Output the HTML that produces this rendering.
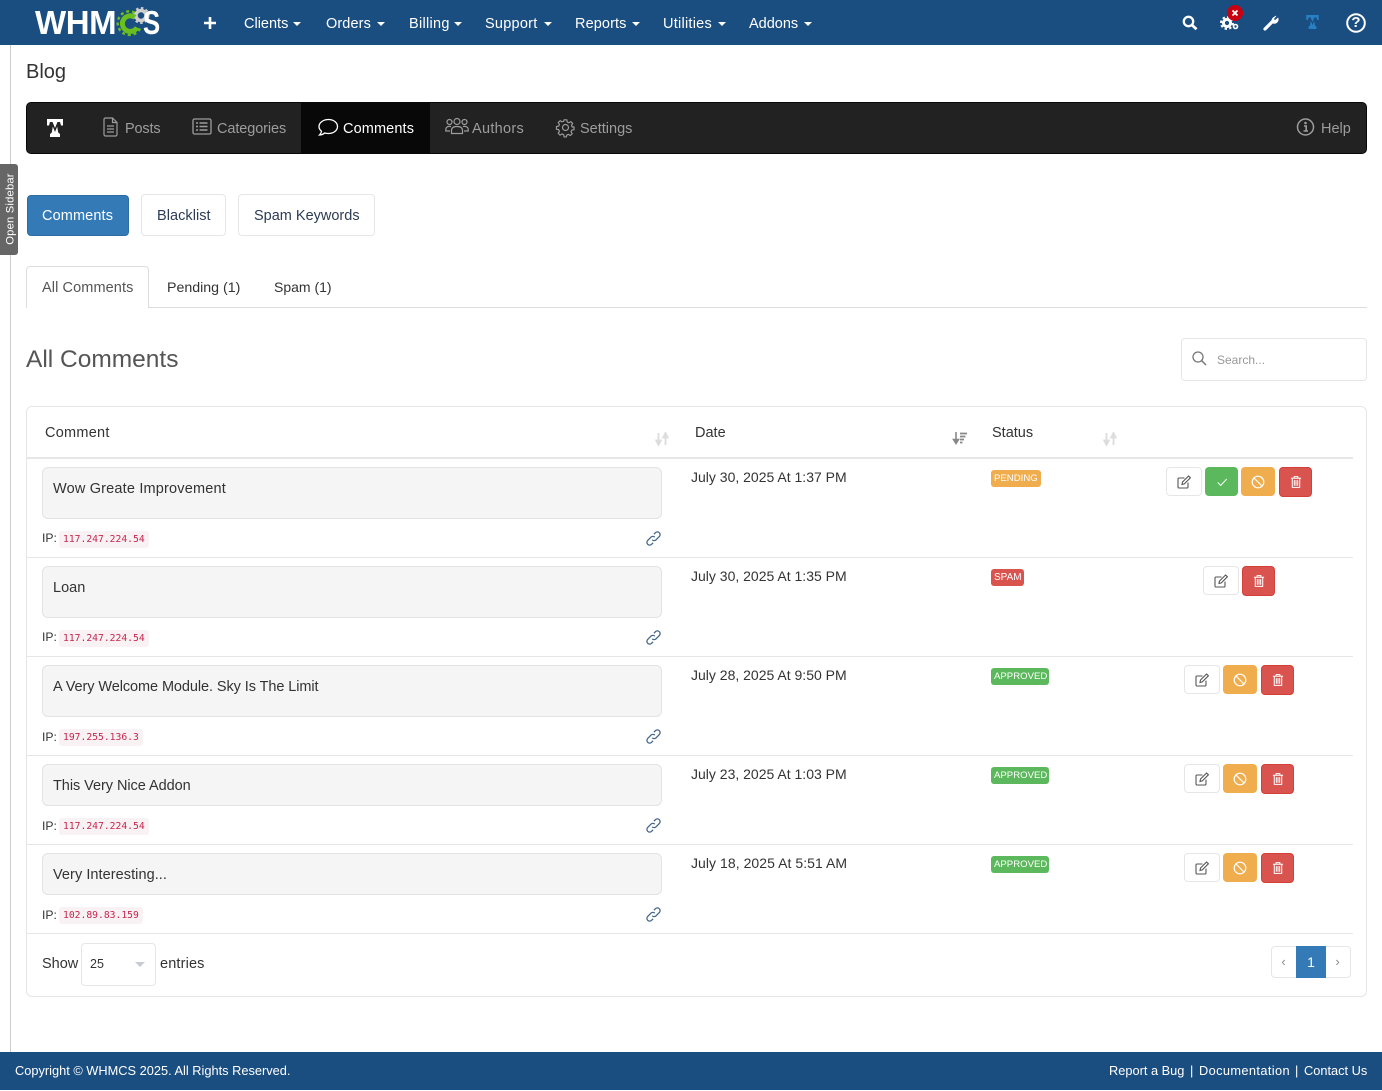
<!DOCTYPE html>
<html lang="en"><head><meta charset="utf-8"><title>Blog - Comments</title>
<style>
*{box-sizing:border-box}
html,body{margin:0;padding:0;background:#fff}
body{position:relative;width:1382px;height:1091px;overflow:hidden;font-family:"Liberation Sans",sans-serif;font-size:14.5px;color:#333}
.b{position:absolute}
.t{position:absolute;white-space:nowrap;line-height:20px;height:20px}
.nav{color:#fff}
.car{position:absolute;width:0;height:0;border-left:4px solid transparent;border-right:4px solid transparent;border-top:4px solid #fff;top:22px}
.dk{color:#9d9d9d}
.row{position:absolute;left:27px;width:1326px;height:1px;background:#e6e6e6}
.box{position:absolute;left:42px;width:620px;background:#f5f5f5;border:1px solid #e3e3e3;border-radius:6px}
.code{position:absolute;height:17px;line-height:17px;background:#f9f2f4;color:#c7254e;font-family:"DejaVu Sans Mono","Liberation Mono",monospace;font-size:9.7px;border-radius:3px;padding-left:4px;white-space:nowrap}
.lab{position:absolute;left:991px;height:17px;line-height:18px;color:#fff;font-size:9.6px;border-radius:3px;padding-left:3px;white-space:nowrap}
.btn{position:absolute;border-radius:4px}
.btn svg{position:absolute;left:50%;top:50%;transform:translate(-50%,-50%)}
.ed{width:36px;height:29px;background:#fff;border:1px solid #e6e6e6}
.gr{width:33px;height:29px;background:#5cb85c}
.or{width:34px;height:29px;background:#f0ad4e}
.rd{width:33px;height:30px;background:#d9534f;border:1px solid #d43f3a}
svg{overflow:visible;display:block}
.ic{position:absolute}
</style></head><body>
<svg width="0" height="0" style="position:absolute">
<defs>
<symbol id="edit" viewBox="0 0 14 14"><path d="M11 7.6V12a1 1 0 0 1-1 1H2a1 1 0 0 1-1-1V4a1 1 0 0 1 1-1h5.500" fill="none" stroke="#555" stroke-width="1.100"/><path d="M5 9.500 5.500 7 11.600 1l1.800 1.800L7.300 8.900z" fill="none" stroke="#555" stroke-width="1.100"/></symbol>
<symbol id="check" viewBox="0 0 14 14"><path d="M2 7.500 5.500 11 12.500 3.500" fill="none" stroke="#fff" stroke-width="1.200"/></symbol>
<symbol id="ban" viewBox="0 0 14 14"><circle cx="7" cy="7" r="5.800" fill="none" stroke="#fff" stroke-width="1.200"/><path d="M3 3 11 11" stroke="#fff" stroke-width="1.200"/></symbol>
<symbol id="trash" viewBox="0 0 14 14"><path d="M1.500 3h11M5 3V1.200h4V3M3 3v9.800h8V3M5.200 5v6M7 5v6M8.800 5v6" fill="none" stroke="#fff" stroke-width="1.100"/></symbol>
<symbol id="link" viewBox="0 0 14 14"><path d="M5.800 8.200a2.500 2.500 0 0 0 3.600 0l3-3a2.500 2.500 0 0 0-3.600-3.600L7.400 3" fill="none" stroke="#44668c" stroke-width="1.200"/><path d="M8.200 5.800a2.500 2.500 0 0 0-3.600 0l-3 3a2.500 2.500 0 0 0 3.600 3.600L6.600 11" fill="none" stroke="#44668c" stroke-width="1.200"/></symbol>
<symbol id="sort" viewBox="0 0 14 14"><path d="M3.500 1v10M1.200 8.500 3.500 13l2.300-4.500zM10.500 13V3M8.200 5.500 10.500 1l2.300 4.500z" fill="#ddd" stroke="#ddd" stroke-width="1.800"/></symbol>
<symbol id="tm" viewBox="0 0 16 18"><path d="M0 0h16v6.500h-2L13 3h-2.500L8 9 5.500 3H3L2 6.500H0zM5.800 7.500 8 13l2.200-5.500 1 6 1.800 1.500V18H3v-3l1.800-1.500z" fill="currentColor"/></symbol>
</defs></svg>

<!-- top nav -->
<div class="b" style="left:0;top:0;width:1382px;height:45px;background:#1a4d80"></div>
<div class="t" style="left:35px;top:3px;height:40px;line-height:40px;font-size:33px;font-weight:bold;color:#fff;letter-spacing:-.4px">WHM</div>
<svg class="ic" style="left:113px;top:7px" width="36" height="30" viewBox="0 0 36 30">
<circle cx="28" cy="8.500" r="5" fill="none" stroke="#cfcfcf" stroke-width="3.500"/>
<circle cx="28" cy="8.500" r="7.500" fill="none" stroke="#cfcfcf" stroke-width="2" stroke-dasharray="2.500 2.500"/>
<path d="M21.800 10.300A7.800 7.800 0 1 0 24 20.500" fill="none" stroke="#6bbe1f" stroke-width="5"/>
<path d="M21.800 5.600A11.800 11.800 0 1 0 27 21.500" fill="none" stroke="#6bbe1f" stroke-width="2.400" stroke-dasharray="3 2.800"/>
</svg>
<div class="t" style="left:143px;top:3px;height:40px;line-height:40px;font-size:33px;font-weight:bold;color:#fff;transform:scaleX(.78);transform-origin:left center">S</div>
<svg class="ic" style="left:203px;top:16px" width="14" height="14"><path d="M7 1v12M1 7h12" stroke="#fff" stroke-width="2.600"/></svg>
<div class="t nav" style="left:244px;top:14px">Clients</div><i class="car" style="left:293px"></i>
<div class="t nav" style="left:326px;top:14px;letter-spacing:.1px">Orders</div><i class="car" style="left:377px"></i>
<div class="t nav" style="left:409px;top:14px;letter-spacing:.3px">Billing</div><i class="car" style="left:454px"></i>
<div class="t nav" style="left:485px;top:14px;letter-spacing:.25px">Support</div><i class="car" style="left:544px"></i>
<div class="t nav" style="left:575px;top:14px;letter-spacing:.1px">Reports</div><i class="car" style="left:632px"></i>
<div class="t nav" style="left:663px;top:14px;letter-spacing:.25px">Utilities</div><i class="car" style="left:718px"></i>
<div class="t nav" style="left:749px;top:14px">Addons</div><i class="car" style="left:804px"></i>
<svg class="ic" style="left:1182px;top:15px" width="16" height="15"><circle cx="6.500" cy="6.500" r="4.700" fill="none" stroke="#fff" stroke-width="2.300"/><path d="M10 10l4.500 4.300" stroke="#fff" stroke-width="2.800"/></svg>
<svg class="ic" style="left:1220px;top:16px" width="20" height="15"><circle cx="7" cy="7" r="3.600" fill="none" stroke="#fff" stroke-width="3"/><circle cx="7" cy="7" r="6" fill="none" stroke="#fff" stroke-width="2" stroke-dasharray="2.400 2.300"/><circle cx="15.500" cy="10.500" r="2" fill="none" stroke="#fff" stroke-width="1.600"/></svg>
<div class="b" style="left:1227px;top:5px;width:16px;height:16px;border-radius:50%;background:#c9000f"></div>
<svg class="ic" style="left:1232px;top:10px" width="6" height="6"><path d="M.5.5l5 5M5.500.5l-5 5" stroke="#fff" stroke-width="1.800"/></svg>
<svg class="ic" style="left:1263px;top:15px" width="16" height="16"><path d="M2 14 9.500 6.500" stroke="#fff" stroke-width="3.200" stroke-linecap="round"/><path d="M9.500 8A4 4 0 0 1 10.500 2.500L13 1 10.500 4l1.500 1.500L15 3a4 4 0 0 1-5.500 5z" fill="#fff" stroke="#fff" stroke-width=".6"/></svg>
<svg class="ic" style="left:1306px;top:15px;color:#2780c5" width="13" height="14"><use href="#tm" width="13" height="14"/></svg>
<svg class="ic" style="left:1346px;top:13px" width="20" height="20"><circle cx="10" cy="10" r="8.800" fill="none" stroke="#fff" stroke-width="2"/></svg>
<div class="t" style="left:1346px;top:13px;width:20px;text-align:center;color:#fff;font-weight:bold;font-size:15px">?</div>

<!-- side -->
<div class="b" style="left:10px;top:45px;width:1px;height:1007px;background:#ccc"></div>
<div class="b" style="left:0;top:164px;width:18px;height:91px;background:#666;border-radius:0 3px 3px 0"></div>
<div class="t" style="left:-35px;top:199px;width:91px;text-align:center;color:#fff;font-size:11.200px;transform:rotate(-90deg);letter-spacing:.2px">Open Sidebar</div>

<div class="t" style="left:26px;top:62px;font-size:20px">Blog</div>

<!-- dark menu -->
<div class="b" style="left:26px;top:102px;width:1341px;height:52px;background:#222;border:1px solid #080808;border-radius:5px"></div>
<div class="b" style="left:301px;top:103px;width:129px;height:50px;background:#080808"></div>
<svg class="ic" style="left:47px;top:119px;color:#fff" width="16" height="18"><use href="#tm" width="16" height="18"/></svg>
<svg class="ic" style="left:103px;top:117px" width="15" height="20"><path d="M1 2.500A1.500 1.500 0 0 1 2.500 1H9.500L14 5.500V17.500A1.500 1.500 0 0 1 12.500 19H2.500A1.500 1.500 0 0 1 1 17.500zM9.500 1V5.500H14M4 9h7M4 12h7M4 15h7" fill="none" stroke="#9d9d9d" stroke-width="1.200"/></svg>
<div class="t dk" style="left:125px;top:119px;letter-spacing:-.15px">Posts</div>
<svg class="ic" style="left:192px;top:118px" width="20" height="18"><rect x="1" y="1" width="18" height="15" rx="1.500" fill="none" stroke="#9d9d9d" stroke-width="1.300"/><path d="M4 5h2M4 8.500h2M4 12h2M7.500 5h8M7.500 8.500h8M7.500 12h8" stroke="#9d9d9d" stroke-width="1.400"/></svg>
<div class="t dk" style="left:217px;top:119px;letter-spacing:-.1px">Categories</div>
<svg class="ic" style="left:318px;top:118px" width="21" height="18"><path d="M10.500 1.500C5.500 1.500 1 4.500 1 8.500c0 2 1 3.500 2.500 4.800C3.300 15 2.300 16.200 1.500 17c2.500 0 4-1 5-2 1.300.4 2.600.5 4 .5 5 0 9-3 9-7s-4-7-9-7z" fill="none" stroke="#fff" stroke-width="1.300"/></svg>
<div class="t" style="left:343px;top:119px;color:#fff;letter-spacing:.12px">Comments</div>
<svg class="ic" style="left:445px;top:118px" width="24" height="17" fill="none" stroke="#9d9d9d" stroke-width="1.200"><circle cx="4.500" cy="4" r="2.500"/><circle cx="12" cy="3.500" r="3"/><circle cx="19.500" cy="4" r="2.500"/><path d="M6.500 15.500v-3c0-2.500 2-4 5.500-4s5.500 1.500 5.500 4v3zM6 8.500C3 8 .8 9 .8 11.500V13H5M18 8.500c3-.5 5.200.5 5.200 3V13H19"/></svg>
<div class="t dk" style="left:472px;top:119px;letter-spacing:.3px">Authors</div>
<svg class="ic" style="left:556px;top:118px" width="19" height="19" viewBox="0 0 19 19"><circle cx="9.500" cy="9.500" r="3" fill="none" stroke="#9d9d9d" stroke-width="1.200"/><path d="M8 1h3l.5 2.500 1.800.8 2.200-1.300 2 2.100-1.300 2.100.8 1.800L19 9v3l-2.500.5-.8 1.800 1.300 2.200-2.100 2-2.100-1.300-1.800.8L10.500 20H8l-.5-2.500-1.800-.8-2.200 1.300-2-2.100 1.300-2.100-.8-1.800L-.500 11.500V8.500L2 8l.8-1.800L1.500 4l2.100-2 2.100 1.300 1.800-.8z" transform="translate(.9 .9) scale(.9)" fill="none" stroke="#9d9d9d" stroke-width="1.300"/></svg>
<div class="t dk" style="left:580px;top:119px">Settings</div>
<svg class="ic" style="left:1296px;top:118px" width="19" height="18"><circle cx="9.500" cy="9" r="8" fill="none" stroke="#9d9d9d" stroke-width="1.500"/><path d="M8 8h2.200v4.500M7.500 13h4.500" fill="none" stroke="#9d9d9d" stroke-width="1.600"/><circle cx="9.500" cy="5" r="1.300" fill="#9d9d9d"/></svg>
<div class="t dk" style="left:1321px;top:119px">Help</div>

<!-- sub buttons -->
<div class="b" style="left:27px;top:195px;width:102px;height:41px;background:#337ab7;border:1px solid #2e6da4;border-radius:4px"></div>
<div class="t" style="left:42px;top:206px;color:#fff;letter-spacing:.12px">Comments</div>
<div class="b" style="left:141px;top:194px;width:85px;height:42px;border:1px solid #e6e6e6;border-radius:4px"></div>
<div class="t" style="left:157px;top:206px;color:#2b3c55;letter-spacing:.05px">Blacklist</div>
<div class="b" style="left:238px;top:194px;width:137px;height:42px;border:1px solid #e6e6e6;border-radius:4px"></div>
<div class="t" style="left:254px;top:206px;color:#2b3c55">Spam Keywords</div>

<!-- tabs -->
<div class="b" style="left:26px;top:307px;width:1341px;height:1px;background:#ddd"></div>
<div class="b" style="left:26px;top:266px;width:123px;height:42px;background:#fff;border:1px solid #ddd;border-bottom:0;border-radius:4px 4px 0 0"></div>
<div class="t" style="left:42px;top:278px;color:#555;letter-spacing:.1px">All Comments</div>
<div class="t" style="left:167px;top:278px;color:#333;font-size:14.200px">Pending (1)</div>
<div class="t" style="left:274px;top:277px;color:#333;font-size:14px">Spam (1)</div>

<div class="t" style="left:26px;top:345px;height:30px;line-height:30px;font-size:24.500px;color:#555">All Comments</div>
<div class="b" style="left:1181px;top:338px;width:186px;height:43px;border:1px solid #e6e6e6;border-radius:4px"></div>
<svg class="ic" style="left:1192px;top:351px" width="15" height="15"><circle cx="6" cy="6" r="5" fill="none" stroke="#777" stroke-width="1.300"/><path d="M9.500 9.500l4.500 4.500" stroke="#777" stroke-width="1.500"/></svg>
<div class="t" style="left:1217px;top:350px;font-size:12px;color:#999">Search...</div>

<!-- table card -->
<div class="b" style="left:26px;top:406px;width:1341px;height:591px;border:1px solid #e6e6e6;border-radius:6px"></div>
<div class="t" style="left:45px;top:423px;letter-spacing:.25px">Comment</div>
<div class="t" style="left:695px;top:423px">Date</div>
<div class="t" style="left:992px;top:423px">Status</div>
<svg class="ic" style="left:655px;top:432px" width="14" height="14"><use href="#sort" width="14" height="14"/></svg>
<svg class="ic" style="left:952px;top:431px" width="15" height="15"><path d="M4 1v10M1.500 8.500 4 12.500l2.500-4z" fill="#888" stroke="#888" stroke-width="1.600"/><path d="M8 2.500h7M8 5.500h5.500M8 8.500h4M8 11.500h2.500" stroke="#888" stroke-width="1.800"/></svg>
<svg class="ic" style="left:1103px;top:432px" width="14" height="14"><use href="#sort" width="14" height="14"/></svg>
<div class="row" style="top:457px;height:2px"></div>
<div class="row" style="top:557px"></div>
<div class="row" style="top:656px"></div>
<div class="row" style="top:755px"></div>
<div class="row" style="top:844px"></div>
<div class="row" style="top:933px"></div>

<!-- row 1 -->
<div class="box" style="top:467px;height:52px"></div>
<div class="t" style="left:53px;top:479px;letter-spacing:.18px">Wow Greate Improvement</div>
<div class="t" style="left:42px;top:528px;font-size:12.200px">IP:</div><div class="code" style="left:59px;top:531px;width:90px">117.247.224.54</div>
<svg class="ic" style="left:646px;top:531px" width="15" height="15"><use href="#link" width="15" height="15"/></svg>
<div class="t" style="left:691px;top:467px;font-size:14px">July 30, 2025 At 1:37 PM</div>
<div class="lab" style="top:470px;width:50px;background:#f0ad4e">PENDING</div>
<div class="btn ed" style="left:1166px;top:467px"><svg width="14" height="14"><use href="#edit" width="14" height="14"/></svg></div>
<div class="btn gr" style="left:1205px;top:467px"><svg width="12" height="12"><use href="#check" width="12" height="12"/></svg></div>
<div class="btn or" style="left:1241px;top:467px"><svg width="14" height="14"><use href="#ban" width="14" height="14"/></svg></div>
<div class="btn rd" style="left:1279px;top:467px"><svg width="13" height="14"><use href="#trash" width="13" height="14"/></svg></div>

<!-- row 2 -->
<div class="box" style="top:566px;height:52px"></div>
<div class="t" style="left:53px;top:578px">Loan</div>
<div class="t" style="left:42px;top:627px;font-size:12.200px">IP:</div><div class="code" style="left:59px;top:630px;width:90px">117.247.224.54</div>
<svg class="ic" style="left:646px;top:630px" width="15" height="15"><use href="#link" width="15" height="15"/></svg>
<div class="t" style="left:691px;top:566px;font-size:14px">July 30, 2025 At 1:35 PM</div>
<div class="lab" style="top:569px;width:33px;background:#d9534f;font-size:10px">SPAM</div>
<div class="btn ed" style="left:1203px;top:566px"><svg width="14" height="14"><use href="#edit" width="14" height="14"/></svg></div>
<div class="btn rd" style="left:1242px;top:566px"><svg width="13" height="14"><use href="#trash" width="13" height="14"/></svg></div>

<!-- row 3 -->
<div class="box" style="top:665px;height:52px"></div>
<div class="t" style="left:53px;top:677px;letter-spacing:-.08px">A Very Welcome Module. Sky Is The Limit</div>
<div class="t" style="left:42px;top:727px;font-size:12.200px">IP:</div><div class="code" style="left:59px;top:729px;width:84px">197.255.136.3</div>
<svg class="ic" style="left:646px;top:729px" width="15" height="15"><use href="#link" width="15" height="15"/></svg>
<div class="t" style="left:691px;top:665px;font-size:14px">July 28, 2025 At 9:50 PM</div>
<div class="lab" style="top:668px;width:58px;background:#5cb85c">APPROVED</div>
<div class="btn ed" style="left:1184px;top:665px"><svg width="14" height="14"><use href="#edit" width="14" height="14"/></svg></div>
<div class="btn or" style="left:1223px;top:665px"><svg width="14" height="14"><use href="#ban" width="14" height="14"/></svg></div>
<div class="btn rd" style="left:1261px;top:665px"><svg width="13" height="14"><use href="#trash" width="13" height="14"/></svg></div>

<!-- row 4 -->
<div class="box" style="top:764px;height:42px"></div>
<div class="t" style="left:53px;top:776px;letter-spacing:-.05px">This Very Nice Addon</div>
<div class="t" style="left:42px;top:816px;font-size:12.200px">IP:</div><div class="code" style="left:59px;top:818px;width:90px">117.247.224.54</div>
<svg class="ic" style="left:646px;top:818px" width="15" height="15"><use href="#link" width="15" height="15"/></svg>
<div class="t" style="left:691px;top:764px;font-size:14px">July 23, 2025 At 1:03 PM</div>
<div class="lab" style="top:767px;width:58px;background:#5cb85c">APPROVED</div>
<div class="btn ed" style="left:1184px;top:764px"><svg width="14" height="14"><use href="#edit" width="14" height="14"/></svg></div>
<div class="btn or" style="left:1223px;top:764px"><svg width="14" height="14"><use href="#ban" width="14" height="14"/></svg></div>
<div class="btn rd" style="left:1261px;top:764px"><svg width="13" height="14"><use href="#trash" width="13" height="14"/></svg></div>

<!-- row 5 -->
<div class="box" style="top:853px;height:42px"></div>
<div class="t" style="left:53px;top:865px;letter-spacing:.06px">Very Interesting...</div>
<div class="t" style="left:42px;top:905px;font-size:12.200px">IP:</div><div class="code" style="left:59px;top:907px;width:84px">102.89.83.159</div>
<svg class="ic" style="left:646px;top:907px" width="15" height="15"><use href="#link" width="15" height="15"/></svg>
<div class="t" style="left:691px;top:853px;font-size:14px;letter-spacing:.05px">July 18, 2025 At 5:51 AM</div>
<div class="lab" style="top:856px;width:58px;background:#5cb85c">APPROVED</div>
<div class="btn ed" style="left:1184px;top:853px"><svg width="14" height="14"><use href="#edit" width="14" height="14"/></svg></div>
<div class="btn or" style="left:1223px;top:853px"><svg width="14" height="14"><use href="#ban" width="14" height="14"/></svg></div>
<div class="btn rd" style="left:1261px;top:853px"><svg width="13" height="14"><use href="#trash" width="13" height="14"/></svg></div>

<!-- table footer -->
<div class="t" style="left:42px;top:954px">Show</div>
<div class="b" style="left:81px;top:943px;width:75px;height:43px;border:1px solid #e6e6e6;border-radius:4px"></div>
<div class="t" style="left:90px;top:954px;font-size:12.500px">25</div>
<div class="b" style="left:135px;top:962px;width:0;height:0;border-left:5px solid transparent;border-right:5px solid transparent;border-top:5px solid #c8ccd0"></div>
<div class="t" style="left:160px;top:954px;letter-spacing:.15px">entries</div>
<div class="b" style="left:1271px;top:946px;width:80px;height:32px;border:1px solid #e6e6e6;border-radius:4px"></div>
<div class="b" style="left:1296px;top:946px;width:30px;height:32px;background:#337ab7"></div>
<div class="t" style="left:1271px;top:952px;width:25px;text-align:center;color:#888;font-size:13px">‹</div>
<div class="t" style="left:1296px;top:952px;width:30px;text-align:center;color:#fff;font-size:14px">1</div>
<div class="t" style="left:1325px;top:952px;width:25px;text-align:center;color:#888;font-size:13px">›</div>

<!-- footer -->
<div class="b" style="left:0;top:1052px;width:1382px;height:38px;background:#1a4d80"></div>
<div class="t" style="left:15px;top:1061px;color:#fff;font-size:12.800px">Copyright © WHMCS 2025. All Rights Reserved.</div>
<div class="t" style="left:1109px;top:1061px;color:#fff;font-size:12.800px">Report a Bug</div>
<div class="t" style="left:1190px;top:1061px;color:#fff;font-size:12.800px">|</div>
<div class="t" style="left:1199px;top:1061px;color:#fff;font-size:12.800px;letter-spacing:.38px">Documentation</div>
<div class="t" style="left:1295px;top:1061px;color:#fff;font-size:12.800px">|</div>
<div class="t" style="left:1304px;top:1061px;color:#fff;font-size:12.800px">Contact Us</div>
</body></html>
